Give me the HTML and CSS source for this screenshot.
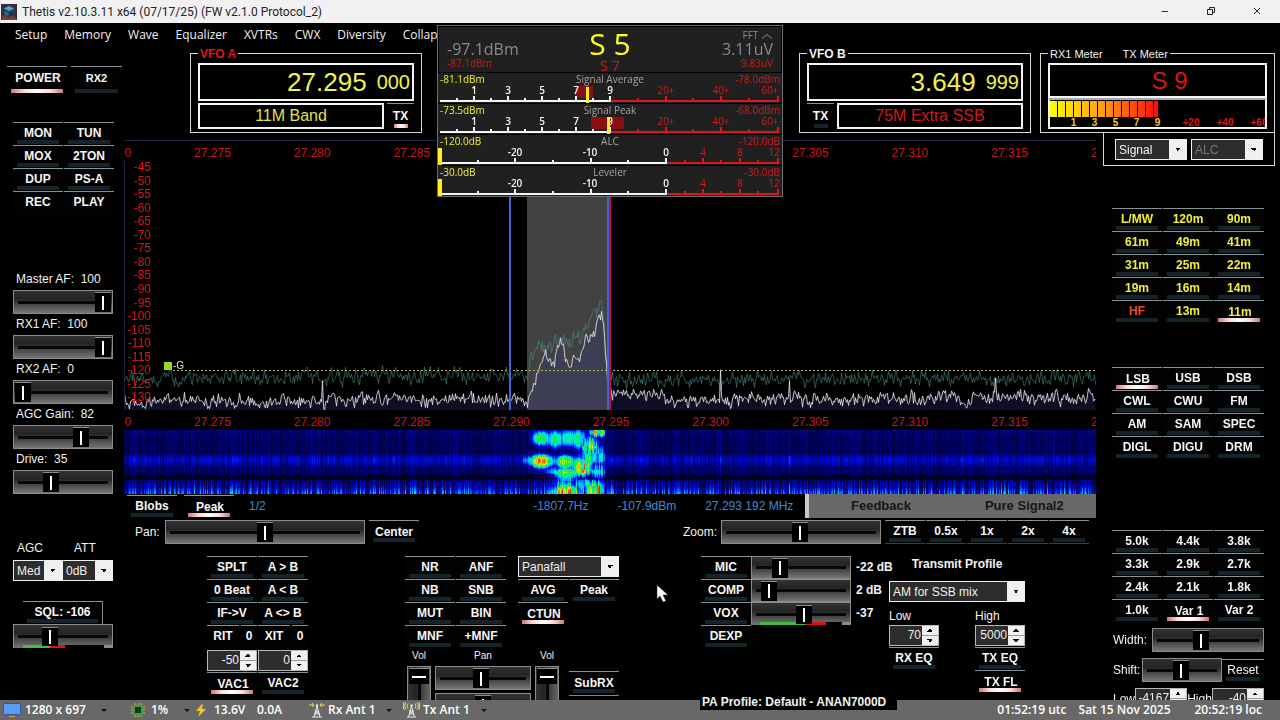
FILE: index.html
```html
<!DOCTYPE html>
<html lang="en">
<head>
<meta charset="utf-8">
<title>Thetis v2.10.3.11 x64</title>
<link rel="stylesheet" href="styles.css">
</head>
<body>
<div class="app">
  <header class="titlebar">
    <svg class="app-icon" width="16" height="16" viewBox="0 0 16 16" aria-hidden="true"><rect width="16" height="16" fill="#3b2a35"/><path d="M1 12l5-2 9 3v3H1z" fill="#7c3a34"/><path d="M8 1l6 3v6l-6 4-6-4V4z" fill="#1d4560"/><path d="M8 2l5 2.500-5 2.500-5-2.500z" fill="#5fa0bd"/><path d="M4 7l3 2v3L4 10z" fill="#2f7090"/><path d="M9 9l3-2v3l-3 2z" fill="#12304a"/></svg>
    <h1>Thetis v2.10.3.11 x64 (07/17/25) (FW v2.1.0 Protocol_2)</h1>
    <div class="win-buttons">
      <button type="button" aria-label="Minimize"><svg width="10" height="10" viewBox="0 0 10 10"><path d="M1.500 5.500h6.500" stroke="#333" fill="none"/></svg></button>
      <button type="button" aria-label="Restore"><svg width="10" height="10" viewBox="0 0 10 10"><path d="M1.500 3.500h5v5h-5zM3.500 3V1.500h5v5H7" stroke="#222" fill="none"/></svg></button>
      <button type="button" aria-label="Close"><svg width="10" height="10" viewBox="0 0 10 10"><path d="M2 2l6 6M8 2l-6 6" stroke="#222" fill="none"/></svg></button>
    </div>
  </header>

  <nav class="menu">
    <a href="#">Setup</a><a href="#">Memory</a><a href="#">Wave</a><a href="#">Equalizer</a><a href="#">XVTRs</a><a href="#">CWX</a><a href="#">Diversity</a><a href="#">Collapse</a>
  </nav>

  <main class="console">
    <aside class="left">
      <div class="power-row">
        <button class="btn wide on" type="button">POWER</button>
        <button class="btn" type="button">RX2</button>
      </div>
      <div class="grid2 tx-keys">
        <button class="btn" type="button">MON</button><button class="btn" type="button">TUN</button>
        <button class="btn" type="button">MOX</button><button class="btn" type="button">2TON</button>
        <button class="btn" type="button">DUP</button><button class="btn" type="button">PS-A</button>
        <button class="btn plain" type="button">REC</button><button class="btn plain" type="button">PLAY</button>
      </div>
      <div class="gains">
        <div><label for="maf">Master AF:  100</label><input id="maf" type="range" value="100"></div>
        <div><label for="r1af">RX1 AF:  100</label><input id="r1af" type="range" value="100"></div>
        <div><label for="r2af">RX2 AF:  0</label><input id="r2af" type="range" value="0"></div>
        <div><label for="agcg">AGC Gain:  82</label><input id="agcg" type="range" value="73"></div>
        <div><label for="drive">Drive:  35</label><input id="drive" type="range" value="35"></div>
      </div>
      <div class="agc">
        <label for="agc">AGC</label><label for="att">ATT</label>
        <select id="agc"><option>Med</option></select>
        <select id="att"><option>0dB</option></select>
      </div>
      <div class="sql">
        <button class="btn boxed" type="button">SQL: -106</button>
        <input class="level-sql" type="range" value="34" aria-label="Squelch">
      </div>
    </aside>

    <section class="top">
      <fieldset class="vfo vfo-a">
        <legend>VFO A</legend>
        <div class="freq"><span>27.295</span><small>000</small></div>
        <div class="band-row"><div class="band">11M Band</div><button class="btn tx on" type="button">TX</button></div>
      </fieldset>
      <fieldset class="vfo vfo-b">
        <legend>VFO B</legend>
        <div class="freq"><span>3.649</span><small>999</small></div>
        <div class="band-row"><button class="btn tx" type="button">TX</button><div class="band off">75M Extra SSB</div></div>
      </fieldset>
      <fieldset class="vfo meter">
        <legend><span>RX1 Meter</span><span>TX Meter</span></legend>
        <div class="readout">S 9</div>
        <div class="bar">
          <div class="bar-fill"></div>
          <div class="bar-scale"><span>1</span><span>3</span><span>5</span><span>7</span><span>9</span><span class="over">+20</span><span class="over">+40</span><span class="over">+60</span></div>
        </div>
      </fieldset>
    </section>

    <section class="center">
      <div class="panadapter">
        <div class="freqs"><span>27.270</span><span>27.275</span><span>27.280</span><span>27.285</span><span>27.290</span><span>27.295</span><span>27.300</span><span>27.305</span><span>27.310</span><span>27.315</span><span>27.320</span></div>
        <div class="spectrum">
          <canvas id="spectrum"></canvas>
          <div class="levels"><span>-45</span><span>-50</span><span>-55</span><span>-60</span><span>-65</span><span>-70</span><span>-75</span><span>-80</span><span>-85</span><span>-90</span><span>-95</span><span>-100</span><span>-105</span><span>-110</span><span>-115</span><span>-120</span><span>-125</span><span>-130</span></div>
          <div class="agc-flag"><i></i>-G</div>
        </div>
        <div class="freqs"><span>27.270</span><span>27.275</span><span>27.280</span><span>27.285</span><span>27.290</span><span>27.295</span><span>27.300</span><span>27.305</span><span>27.310</span><span>27.315</span><span>27.320</span></div>
        <canvas id="waterfall"></canvas>
      </div>

      <div class="info">
        <button class="btn" type="button">Blobs</button>
        <button class="btn on" type="button">Peak</button>
        <span class="blue">1/2</span>
        <div class="cursor-info blue"><span>-1807.7Hz</span><span>-107.9dBm</span><span>27.293 192 MHz</span></div>
        <div class="puresignal"><span>Feedback</span><span>Pure Signal2</span></div>
      </div>

      <div class="panzoom">
        <label for="pan">Pan:</label><input id="pan" class="w200" type="range" value="50">
        <button class="btn" type="button">Center</button>
        <label for="zoom" class="push">Zoom:</label><input id="zoom" class="w160" type="range" value="49">
        <div class="zooms">
          <button class="btn" type="button">ZTB</button><button class="btn" type="button">0.5x</button><button class="btn" type="button">1x</button><button class="btn" type="button">2x</button><button class="btn" type="button">4x</button>
        </div>
      </div>

      <div class="controls">
        <div class="vfo-ctl">
          <div class="grid2">
            <button class="btn" type="button">SPLT</button><button class="btn" type="button">A &gt; B</button>
            <button class="btn" type="button">0 Beat</button><button class="btn" type="button">A &lt; B</button>
            <button class="btn" type="button">IF-&gt;V</button><button class="btn" type="button">A &lt;&gt; B</button>
            <div class="split"><button class="btn plain" type="button">RIT</button><button class="btn plain" type="button">0</button></div>
            <div class="split"><button class="btn plain" type="button">XIT</button><button class="btn plain" type="button">0</button></div>
          </div>
          <div class="grid2 spins">
            <div class="spin"><input value="-50" aria-label="RIT offset"><span><button type="button" aria-label="Up"></button><button class="down" type="button" aria-label="Down"></button></span></div>
            <div class="spin"><input value="0" aria-label="XIT offset"><span><button type="button" aria-label="Up"></button><button class="down" type="button" aria-label="Down"></button></span></div>
          </div>
          <div class="grid2">
            <button class="btn on" type="button">VAC1</button><button class="btn" type="button">VAC2</button>
          </div>
        </div>

        <div class="dsp">
          <div class="dsp-top">
            <div class="grid2">
              <button class="btn" type="button">NR</button><button class="btn" type="button">ANF</button>
              <button class="btn" type="button">NB</button><button class="btn" type="button">SNB</button>
              <button class="btn" type="button">MUT</button><button class="btn" type="button">BIN</button>
              <button class="btn" type="button">MNF</button><button class="btn" type="button">+MNF</button>
            </div>
            <div class="display">
              <select aria-label="Display mode"><option>Panafall</option></select>
              <div class="grid2">
                <button class="btn" type="button">AVG</button><button class="btn" type="button">Peak</button>
                <button class="btn on" type="button">CTUN</button>
              </div>
            </div>
          </div>
          <div class="dsp-bottom">
            <div class="vol"><label for="vol1">Vol</label><input id="vol1" class="vert" type="range" value="0"></div>
            <div class="pans"><label for="pan1">Pan</label><input id="pan1" type="range" value="48"><input type="range" value="50" aria-label="Sub receiver pan"></div>
            <div class="vol"><label for="vol2">Vol</label><input id="vol2" class="vert" type="range" value="0"></div>
            <button class="btn subrx" type="button">SubRX</button>
          </div>
        </div>

        <div class="txctl">
          <div class="mic">
            <button class="btn" type="button">MIC</button><input type="range" value="24" aria-label="Mic gain"><b>-22 dB</b>
            <button class="btn" type="button">COMP</button><input type="range" value="10" aria-label="Compression"><b>2 dB</b>
            <button class="btn" type="button">VOX</button><input class="level-vox" type="range" value="54" aria-label="VOX level"><b>-37</b>
            <button class="btn" type="button">DEXP</button>
          </div>
          <div class="profile">
            <label class="ptitle" for="prof">Transmit Profile</label>
            <select id="prof"><option>AM for SSB mix</option></select>
            <div class="eq">
              <div>
                <label for="txlow">Low</label>
                <div class="spin"><input id="txlow" value="70"><span><button type="button" aria-label="Up"></button><button class="down" type="button" aria-label="Down"></button></span></div>
                <button class="btn" type="button">RX EQ</button>
              </div>
              <div>
                <label for="txhigh">High</label>
                <div class="spin"><input id="txhigh" value="5000"><span><button type="button" aria-label="Up"></button><button class="down" type="button" aria-label="Down"></button></span></div>
                <button class="btn" type="button">TX EQ</button>
                <button class="btn on" type="button">TX FL</button>
              </div>
            </div>
          </div>
        </div>
      </div>
    </section>

    <aside class="right">
      <div class="meter-select">
        <select aria-label="RX meter"><option>Signal</option></select>
        <select aria-label="TX meter" disabled><option>ALC</option></select>
      </div>
      <div class="grid3 bands">
        <button class="btn" type="button">L/MW</button><button class="btn" type="button">120m</button><button class="btn" type="button">90m</button>
        <button class="btn" type="button">61m</button><button class="btn" type="button">49m</button><button class="btn" type="button">41m</button>
        <button class="btn" type="button">31m</button><button class="btn" type="button">25m</button><button class="btn" type="button">22m</button>
        <button class="btn" type="button">19m</button><button class="btn" type="button">16m</button><button class="btn" type="button">14m</button>
        <button class="btn hf" type="button">HF</button><button class="btn" type="button">13m</button><button class="btn on" type="button">11m</button>
      </div>
      <div class="grid3 modes">
        <button class="btn on" type="button">LSB</button><button class="btn" type="button">USB</button><button class="btn" type="button">DSB</button>
        <button class="btn" type="button">CWL</button><button class="btn" type="button">CWU</button><button class="btn" type="button">FM</button>
        <button class="btn" type="button">AM</button><button class="btn" type="button">SAM</button><button class="btn" type="button">SPEC</button>
        <button class="btn" type="button">DIGL</button><button class="btn" type="button">DIGU</button><button class="btn" type="button">DRM</button>
      </div>
      <div class="grid3 filters">
        <button class="btn" type="button">5.0k</button><button class="btn" type="button">4.4k</button><button class="btn" type="button">3.8k</button>
        <button class="btn" type="button">3.3k</button><button class="btn" type="button">2.9k</button><button class="btn" type="button">2.7k</button>
        <button class="btn" type="button">2.4k</button><button class="btn" type="button">2.1k</button><button class="btn" type="button">1.8k</button>
        <button class="btn" type="button">1.0k</button><button class="btn on" type="button">Var 1</button><button class="btn" type="button">Var 2</button>
      </div>
      <div class="fline"><label for="fw">Width:</label><input id="fw" class="w112" type="range" value="42"></div>
      <div class="fline"><label for="fs">Shift:</label><input id="fs" class="w80" type="range" value="49"><button class="btn reset" type="button">Reset</button></div>
      <div class="fline edges">
        <label for="fl">Low</label><div class="spin"><input id="fl" value="-4167"><span><button type="button" aria-label="Up"></button><button class="down" type="button" aria-label="Down"></button></span></div>
        <label for="fh">High</label><div class="spin"><input id="fh" value="-40"><span><button type="button" aria-label="Up"></button><button class="down" type="button" aria-label="Down"></button></span></div>
      </div>
    </aside>
  </main>

  <footer class="status">
    <svg width="18" height="14" viewBox="0 0 18 14" aria-hidden="true"><rect x="0.500" y="0.500" width="17" height="11" rx="1" fill="#5b9cf5" stroke="#2a55a8"/><path d="M6 13.500h6" stroke="#e0a030"/></svg>
    <span class="s-size">1280 x 697</span><i class="caret"></i>
    <svg class="s-cpu" width="14" height="14" viewBox="0 0 14 14" aria-hidden="true"><path d="M4 0v14M7 0v14M10 0v14M0 4h14M0 7h14M0 10h14" stroke="#d9b52c"/><rect x="2" y="2" width="10" height="10" rx="1" fill="#35a04a"/><rect x="4" y="4" width="6" height="6" fill="#1c3324"/></svg>
    <span class="s-load">1%</span><i class="caret"></i>
    <svg class="s-bolt" width="10" height="14" viewBox="0 0 10 14" aria-hidden="true"><path d="M7 0L0 8h4l-2 6 8-8H6z" fill="#f5c52a"/></svg>
    <span class="s-volt">13.6V</span><span class="s-amp">0.0A</span>
    <svg width="16" height="16" viewBox="0 0 16 16" fill="none" aria-hidden="true"><path d="M0 3h5M3 1l2 2-2 2M16 3h-5M13 1l-2 2 2 2" stroke="#f3e02a"/><path d="M8 4L5 15M8 4l3 11M6 9h4M5 12h6M3 15h10M6 9l5 3M10 9l-5 3" stroke="#e8e8e8"/><circle cx="8" cy="3.500" r="1.200" fill="#e8e8e8"/></svg>
    <span class="s-ant">Rx Ant 1</span><i class="caret"></i>
    <svg class="s-tx" width="17" height="16" viewBox="0 0 17 16" fill="none" aria-hidden="true"><path d="M5 1.500q-2 2.500 0 5M3 .5q-3 3.500 0 7M1 0q-1.500 4 0 8M12 1.500q2 2.500 0 5M14 .5q3 3.500 0 7M16 0q1.500 4 0 8" stroke="#f3e02a"/><path d="M8.500 4L5.500 15M8.500 4l3 11M6.500 9h4M6 12h5M4 15h9M6.500 9l4.500 3M10.500 9L6 12" stroke="#e8e8e8"/><circle cx="8.500" cy="3.500" r="1.200" fill="#e8e8e8"/></svg>
    <span class="s-ant">Tx Ant 1</span><i class="caret"></i>
    <time class="s-utc">01:52:19 utc</time><time class="s-date">Sat 15 Nov 2025</time><time>20:52:19 loc</time>
  </footer>

  <div class="pa-profile">PA Profile: Default - ANAN7000D</div>

  <section class="multimeter">
    <div class="mm-head">
      <div class="mm-side"><span class="big">-97.1dBm</span><span class="peak">-87.1dBm</span></div>
      <div class="mm-mid"><span class="s">S 5</span><span class="sp">S 7</span></div>
      <div class="mm-side end"><span class="fft">FFT <svg width="12" height="6" viewBox="0 0 12 6"><path d="M1 5.500l5-4 5 4" fill="none" stroke="#8a8a8a"/></svg></span><span class="big">3.11uV</span><span class="peak">9.83uV</span></div>
    </div>
    <svg class="scale" viewBox="0 0 344 30">
      <rect x="137" y="13" width="18" height="12" fill="#8a0f12"/>
      <g><text x="2" y="10" class="y">-81.1dBm</text><text x="172" y="10" class="g m">Signal Average</text><text x="342" y="10" class="r e">-78.0dBm</text></g>
      <path class="w" d="M2 28h171M36 23v5M70 23v5M104 23v5M138 23v5M172 23v5M19 25v3M53 25v3M87 25v3M121 25v3M155 25v3"/>
      <path class="rd" d="M173 28h168M228 23v5M283 23v5M340 23v5M200 25v3M255 25v3M311 25v3"/>
      <g class="m wt"><text x="36" y="21">1</text><text x="70" y="21">3</text><text x="104" y="21">5</text><text x="138" y="21">7</text><text x="172" y="21">9</text></g>
      <g class="m r num"><text x="228" y="21">20+</text><text x="283" y="21">40+</text><text x="332" y="21">60+</text></g>
      <rect x="148" y="14" width="3" height="16" fill="#ffee20"/>
    </svg>
    <svg class="scale" viewBox="0 0 344 30">
      <rect x="153" y="13" width="33" height="12" fill="#8a0f12"/>
      <g><text x="2" y="10" class="y">-73.5dBm</text><text x="172" y="10" class="g m">Signal Peak</text><text x="342" y="10" class="r e">-68.0dBm</text></g>
      <path class="w" d="M2 28h171M36 23v5M70 23v5M104 23v5M138 23v5M172 23v5M19 25v3M53 25v3M87 25v3M121 25v3M155 25v3"/>
      <path class="rd" d="M173 28h168M228 23v5M283 23v5M340 23v5M200 25v3M255 25v3M311 25v3"/>
      <g class="m wt"><text x="36" y="21">1</text><text x="70" y="21">3</text><text x="104" y="21">5</text><text x="138" y="21">7</text><text x="172" y="21">9</text></g>
      <g class="m r num"><text x="228" y="21">20+</text><text x="283" y="21">40+</text><text x="332" y="21">60+</text></g>
      <rect x="169" y="13" width="3" height="17" fill="#ffee20"/>
    </svg>
    <svg class="scale" viewBox="0 0 344 30">
      <g><text x="2" y="10" class="y">-120.0dB</text><text x="172" y="10" class="g m">ALC</text><text x="342" y="10" class="r e">-120.0dB</text></g>
      <path class="w" d="M2 28h227M77 23v5M153 23v5M228 23v5M40 25v3M115 25v3M190 25v3"/>
      <path class="rd" d="M229 28h112M265 23v5M302 23v5M340 23v5M247 25v3M283 25v3M320 25v3"/>
      <g class="m wt"><text x="77" y="21">-20</text><text x="152" y="21">-10</text><text x="228" y="21">0</text></g>
      <g class="m r num"><text x="265" y="21">4</text><text x="302" y="21">8</text><text x="336" y="21">12</text></g>
      <rect x="0" y="13" width="4" height="17" fill="#ffee20"/>
    </svg>
    <svg class="scale" viewBox="0 0 344 30">
      <g><text x="2" y="10" class="y">-30.0dB</text><text x="172" y="10" class="g m">Leveler</text><text x="342" y="10" class="r e">-30.0dB</text></g>
      <path class="w" d="M2 28h227M77 23v5M153 23v5M228 23v5M40 25v3M115 25v3M190 25v3"/>
      <path class="rd" d="M229 28h112M265 23v5M302 23v5M340 23v5M247 25v3M283 25v3M320 25v3"/>
      <g class="m wt"><text x="77" y="21">-20</text><text x="152" y="21">-10</text><text x="228" y="21">0</text></g>
      <g class="m r num"><text x="265" y="21">4</text><text x="302" y="21">8</text><text x="336" y="21">12</text></g>
      <rect x="0" y="13" width="4" height="17" fill="#ffee20"/>
    </svg>
  </section>

  <svg class="pointer" width="14" height="20" viewBox="0 0 14 20" aria-hidden="true"><path d="M1 1v14l3-3 3 6 3-1-3-6h5z" fill="#fff" stroke="#222" stroke-width=".5"/></svg>
</div>
<script src="app.js"></script>
</body>
</html>
```

FILE: styles.css
```css
* { box-sizing: border-box; }

body {
  margin: 0;
  background: #000;
  color: #f2f2f2;
  font: 12px/16px "Liberation Sans", Arial, sans-serif;
}

.app {
  position: relative;
  display: flex;
  flex-direction: column;
  height: 100vh;
  overflow: hidden;
}

label { white-space: pre; }

/* Title bar and menu */
.titlebar {
  display: flex;
  align-items: center;
  flex: none;
  height: 23px;
  background: #f2f1f1;
  color: #222;
}
.titlebar h1 {
  margin: 0 auto 0 5px;
  font: 400 12px/16px Roboto, "Noto Sans", sans-serif;
}
.app-icon { margin-left: 1px; }
.win-buttons { display: flex; }
.win-buttons button {
  width: 46px;
  height: 23px;
  padding: 0;
  border: 0;
  background: none;
}

.menu {
  display: flex;
  flex: none;
  gap: 17px;
  height: 22px;
  padding: 4px 15px;
  font-family: "Open Sans", "Noto Sans", sans-serif;
}
.menu a {
  color: #f0f0f0;
  text-decoration: none;
}

/* Main grid */
.console {
  display: grid;
  flex: 1;
  grid-template-columns: 124px 1fr 184px;
  grid-template-rows: 88px 1fr;
  min-height: 0;
  overflow: hidden;
}
.left { grid-row: 1 / 3; padding: 21px 2px 0 7px; }
.top { grid-column: 2 / 4; }
.center { padding-top: 7px; min-width: 0; }
.right { padding: 0 5px 0 7px; }

/* Buttons */
.btn {
  width: 50px;
  height: 23px;
  padding: 0 0 2px;
  border: 0;
  border-top: 1px solid #8a9495;
  background: linear-gradient(#15242a, #15242a) center 17px / calc(100% - 8px) 4px no-repeat #020202;
  color: #f6f6f6;
  font: bold 12px/16px "Liberation Sans", Arial, sans-serif;
  white-space: nowrap;
}
.btn.on {
  padding: 0 0 0 2px;
  background: linear-gradient(90deg, #c97a78, #ffd9d6 25%, #fff 50%, #ffd9d6 75%, #c97a78) center 17px / calc(100% - 8px) 4px no-repeat #020202;
}
.btn.plain { background: #020202; }

.grid2, .grid3 {
  display: grid;
  grid-template-columns: 50px 50px;
  column-gap: 1px;
}
.grid3 { grid-template-columns: 50px 50px 50px; }

/* Sliders */
input[type="range"] {
  -webkit-appearance: none;
  appearance: none;
  display: block;
  width: 100px;
  height: 24px;
  margin: 0;
  padding: 0 1px;
  border: 1px solid #8b8b8b;
  background:
    linear-gradient(#070707, #070707) center / calc(100% - 8px) 3px no-repeat,
    linear-gradient(#333, #242424 35%, #767676);
}
input[type="range"]::-webkit-slider-thumb {
  -webkit-appearance: none;
  width: 16px;
  height: 20px;
  border-top: 1px solid #8b8b8b;
  border-radius: 0;
  background: linear-gradient(#fff, #fff) center / 2px 14px no-repeat #000;
}
input.w200 { width: 200px; }
input.w160 { width: 160px; }
input.w112 { width: 112px; }
input.w80 { width: 80px; }
input.level-sql, input.level-vox {
  border-bottom: 0;
  background:
    linear-gradient(90deg, transparent 9%, #3cbf3c 9% 37%, #d81414 37% 52%, #000 52% 92%, #8b8b8b 92%) bottom / 100% 3px no-repeat,
    linear-gradient(#070707, #070707) center / calc(100% - 8px) 3px no-repeat,
    linear-gradient(#333, #242424 35%, #767676);
}
input.level-vox {
  background:
    linear-gradient(90deg, transparent 8%, #3cbf3c 8% 55%, #d81414 55% 76%, #000 76% 92%, #8b8b8b 92%) bottom / 100% 3px no-repeat,
    linear-gradient(#070707, #070707) center / calc(100% - 8px) 3px no-repeat,
    linear-gradient(#333, #242424 35%, #767676);
}
input.level-sql::-webkit-slider-thumb, input.level-vox::-webkit-slider-thumb { height: 19px; }
input.vert {
  writing-mode: vertical-lr;
  width: 24px;
  height: 80px;
  padding: 1px 0;
  background:
    linear-gradient(#070707, #070707) center / 3px calc(100% - 8px) no-repeat,
    linear-gradient(90deg, #333, #242424 35%, #666);
}
input.vert::-webkit-slider-thumb {
  width: 20px;
  height: 16px;
  background: linear-gradient(#fff, #fff) center / 14px 2px no-repeat #000;
}

/* Drop-downs */
select {
  -webkit-appearance: none;
  appearance: none;
  display: block;
  height: 21px;
  margin: 0;
  padding: 0 18px 0 3px;
  border: 1px solid #f0f0f0;
  border-radius: 0;
  background:
    linear-gradient(45deg, transparent 50%, #000 50%) right 8px center / 3px 3px no-repeat,
    linear-gradient(135deg, #000 50%, transparent 50%) right 5px center / 3px 3px no-repeat,
    linear-gradient(#f0f0f0, #f0f0f0) right / 17px 100% no-repeat #2d2d2d;
  color: #f0f0f0;
  font: 12px/16px "Liberation Sans", Arial, sans-serif;
}
select:disabled { color: #777; opacity: 1; }

/* Spin boxes */
.spin {
  display: flex;
  height: 21px;
  border: 1px solid #b8b8b8;
  background: #2d2d2d;
}
.spin input {
  flex: 1;
  width: 0;
  min-width: 0;
  padding: 0 1px 2px 0;
  border: 0;
  background: none;
  color: #eee;
  font: 12px/16px "Liberation Sans", Arial, sans-serif;
  text-align: right;
}
.spin span {
  display: grid;
  width: 16px;
  gap: 1px;
  background: #999;
}
.spin button {
  min-height: 0;
  padding: 0;
  border: 0;
  background:
    linear-gradient(135deg, transparent 50%, #000 50%) 5px center / 3px 3px no-repeat,
    linear-gradient(45deg, #000 50%, transparent 50%) 8px center / 3px 3px no-repeat #f0f0f0;
}
.spin .down {
  background:
    linear-gradient(45deg, transparent 50%, #000 50%) 5px center / 3px 3px no-repeat,
    linear-gradient(135deg, #000 50%, transparent 50%) 8px center / 3px 3px no-repeat #f0f0f0;
}

/* Left column */
.power-row { display: flex; gap: 4px; }
.power-row .btn {
  height: 29px;
  padding-bottom: 6px;
  background-position: center 22px;
}
.power-row .btn:last-child { width: 51px; font-size: 11px; }
.power-row .wide { width: 60px; }
.tx-keys { margin: 27px 0 0 6px; }
.gains {
  display: grid;
  gap: 2px;
  margin: 57px 0 0 6px;
}
.gains label {
  display: block;
  height: 19px;
  padding-left: 3px;
}
.agc {
  display: grid;
  grid-template-columns: 49px 51px;
  row-gap: 4px;
  margin: 46px 0 0 6px;
}
.agc label:first-child { padding-left: 4px; }
.agc label + label { padding-left: 12px; }
.agc select { width: 100%; }
.sql { margin: 20px 0 0 6px; }
.boxed {
  display: block;
  width: 80px;
  margin-left: 10px;
  border-right: 1px solid #7e8889;
}

/* VFO displays and meter */
.top {
  display: flex;
  padding: 1px 5px 0 66px;
}
.vfo {
  display: block;
  width: 232px;
  height: 87px;
  min-width: 0;
  margin: 0;
  padding: 2px 7px 5px;
  border: 1px solid #d8d8d8;
}
.vfo legend {
  height: 15px;
  padding: 0 2px;
  font-weight: bold;
}
.vfo-a legend { color: #e81212; }
.vfo-b { margin-left: auto; }
.meter { width: 235px; margin-left: 9px; }
.vfo.meter legend {
  display: flex;
  gap: 20px;
  font-size: 11px;
  font-weight: 400;
}
.freq {
  display: flex;
  align-items: center;
  justify-content: flex-end;
  gap: 10px;
  height: 38px;
  padding-right: 2px;
  border: 2px solid #f4f4f4;
  color: #f2f24a;
  font-size: 26px;
  line-height: 30px;
}
.freq small { font-size: 20px; }
.band-row {
  display: flex;
  gap: 3px;
  margin-top: 2px;
}
.band {
  flex: 1;
  height: 26px;
  border: 2px solid #f4f4f4;
  color: #e2e24a;
  font-size: 16px;
  line-height: 22px;
  text-align: center;
}
.band.off { color: #d4181c; }
.btn.tx {
  width: 27px;
  height: 26px;
  padding: 0 0 2px;
  background-position: center 20px;
  background-size: 14px 4px;
}
.readout {
  height: 35px;
  padding-left: 24px;
  border: 2px solid #f4f4f4;
  color: #dc1418;
  font-size: 24px;
  line-height: 31px;
  text-align: center;
}
.bar {
  height: 31px;
  overflow: hidden;
  border: 2px solid #f4f4f4;
  border-top-color: #aaa;
}
.bar-fill {
  width: 50%;
  height: 16px;
  margin-top: 1px;
  background:
    repeating-linear-gradient(90deg, transparent 0 7px, #000 7px 8px),
    linear-gradient(90deg, #ffff00, #ff9a18 50%, #ff0a0a);
}
.bar-scale {
  display: grid;
  grid-template-columns: 13px repeat(5, 21px) 6px repeat(3, 34px);
  color: #e8c838;
  font: bold 10px/12px "Liberation Sans", Arial, sans-serif;
  text-align: center;
}
.bar-scale span:first-child { grid-column: 2; }
.bar-scale .over { color: #e01414; }
.bar-scale span:nth-child(6) { grid-column: 8; }

/* Panadapter */
.panadapter {
  overflow: hidden;
  border-top: 1px solid #1c2440;
}
.freqs {
  display: flex;
  height: 20px;
  margin: 0 -63px 0 -61px;
  color: #c8181e;
  line-height: 24px;
}
.freqs span { flex: 1; text-align: center; }
.spectrum {
  position: relative;
  height: 249px;
}
.spectrum canvas { display: block; width: 100%; height: 100%; }
.levels {
  position: absolute;
  top: 0;
  left: 0;
  display: grid;
  width: 27px;
  height: 244px;
  color: #dc161c;
  line-height: 12px;
  text-align: right;
}
.agc-flag {
  position: absolute;
  top: 200px;
  left: 40px;
  display: flex;
  align-items: center;
  gap: 1px;
  color: #e6e6a8;
  font-size: 10px;
  line-height: 10px;
}
.agc-flag i { width: 8px; height: 8px; background: #96d82c; }
#waterfall { display: block; width: 100%; height: 64px; }

/* Readouts below the waterfall */
.blue { color: #3f8ad8; }
.info {
  display: flex;
  height: 24px;
  padding-left: 3px;
  line-height: 24px;
}
.info .btn { margin: 1px 7px 0 0; }
.info > .blue { margin-left: 8px; }
.info .cursor-info {
  display: flex;
  gap: 29px;
  margin: 0 12px 0 auto;
}
.puresignal {
  display: flex;
  width: 30%;
  border-left: 4px solid #c8c8c8;
  background: #686868;
  color: #161616;
  font-size: 13px;
  font-weight: bold;
}
.puresignal span { flex: 1; text-align: center; }

.panzoom {
  display: flex;
  align-items: center;
  height: 24px;
  margin-top: 2px;
  padding: 0 7px 0 11px;
}
.panzoom label { width: 30px; }
.panzoom .push { width: 38px; margin-left: auto; }
.panzoom .btn { height: 24px; }
.panzoom > .btn { margin-left: 4px; }
.zooms { display: flex; gap: 1px; margin-left: 4px; }
.zooms .btn { width: 40px; border-bottom: 1px solid #3a4242; }

/* Bottom controls */
.controls {
  display: grid;
  grid-template-columns: 83fr 101px 97fr 214px 82fr 324px 71fr;
  margin-top: 12px;
}
.vfo-ctl { grid-column: 2; }
.dsp { grid-column: 4; }
.txctl { grid-column: 6; }

.split { display: flex; gap: 2px; }
.split .btn { width: 32px; }
.split .btn + .btn { width: 16px; padding: 0 0 2px; }
.spins { margin: 2px 0 1px; }

.dsp-top { display: flex; gap: 12px; }
.display select { width: 101px; margin-bottom: 2px; }
.dsp-bottom {
  display: flex;
  gap: 4px;
  padding-left: 2px;
}
.dsp-bottom label {
  display: block;
  height: 18px;
  font-size: 10px;
  text-align: center;
}
.pans input { width: 96px; margin-bottom: 3px; }
.subrx {
  height: 25px;
  margin: 23px 0 0 6px;
  border-bottom: 1px solid #7e8889;
}

.txctl { display: flex; justify-content: space-between; }
.mic {
  display: grid;
  grid-template-columns: 50px 100px 38px;
  grid-auto-rows: 23px;
  align-items: start;
}
.mic input { height: 23px; }
.mic b { padding: 3px 0 0 5px; white-space: nowrap; }
.profile { width: 136px; }
.profile .ptitle {
  display: block;
  height: 25px;
  font-weight: bold;
  text-align: center;
}
.profile select { width: 100%; }
.eq {
  display: flex;
  justify-content: space-between;
  margin-top: 6px;
}
.eq > div { width: 50px; }
.eq label { display: block; height: 17px; }
.eq .spin { margin-bottom: 1px; }
.eq .btn { display: block; }

/* Right column */
.meter-select {
  display: flex;
  gap: 4px;
  height: 33px;
  padding: 6px 11px;
  border: 1px solid #d8d8d8;
  border-top: 0;
}
.meter-select select { width: 72px; }
.grid3 { margin-left: 9px; }
.bands { margin-top: 42px; }
.bands .btn { color: #f0f03c; }
.bands .hf { color: #f04a28; }
.modes { margin-top: 44px; }
.filters { margin-top: 71px; margin-bottom: 6px; }
.fline {
  display: flex;
  align-items: center;
  justify-content: space-between;
  height: 24px;
  margin: 0 11px 6px 10px;
}
.fline label { margin-right: auto; }
.reset { width: 42px; font-weight: 400; }
.fline.edges { height: 21px; }
.edges .spin { width: 52px; }

/* Status bar */
.status {
  display: flex;
  align-items: center;
  flex: none;
  height: 20px;
  padding: 0 18px 0 3px;
  background: #686868;
  color: #fff;
  font: 600 12px/20px "Open Sans", "Noto Sans", sans-serif;
  white-space: nowrap;
}
.caret {
  flex: none;
  border: 3px solid transparent;
  border-top-color: #111;
  border-bottom: 0;
}
.status svg { flex: none; }
.s-size { width: 76px; margin-left: 4px; }
.s-cpu { margin-left: 24px; }
.s-load { width: 33px; margin-left: 6px; }
.s-bolt { margin-left: 6px; }
.s-volt { width: 43px; margin-left: 8px; }
.s-amp { width: 52px; }
.s-ant { width: 58px; margin-left: 3px; }
.s-tx { margin-left: 11px; }
.s-utc { margin-left: auto; }
.s-date { margin: 0 24px 0 12px; }

.pa-profile {
  position: absolute;
  bottom: 10px;
  left: 700px;
  width: 197px;
  padding: 0 2px;
  background: #000;
  font-weight: bold;
  white-space: nowrap;
}

/* Floating multimeter */
.multimeter {
  position: absolute;
  top: 25px;
  left: 437px;
  width: 346px;
  border: 1px solid #6c6c6c;
  background: #000;
  font-family: "Open Sans", "Noto Sans", sans-serif;
}
.mm-head {
  display: grid;
  grid-template-columns: 1fr 1fr 1fr;
  height: 45px;
  margin: 1px 1px 0;
  padding: 0 8px;
  background: #202020;
  color: #8a8a8a;
}
.mm-side {
  display: flex;
  flex-direction: column;
  justify-content: flex-end;
  padding-bottom: 3px;
}
.mm-side.end { text-align: right; }
.mm-head .big { font-size: 16px; font-weight: 500; line-height: 17px; }
.mm-head .peak { color: #d8181c; font-size: 10px; line-height: 11px; }
.mm-head .fft { font-size: 10px; line-height: 11px; }
.mm-mid {
  display: flex;
  flex-direction: column;
  text-align: center;
}
.mm-mid .s { color: #ffff1e; font-size: 30px; font-weight: 500; line-height: 34px; }
.mm-mid .sp { color: #d8181c; font-size: 14px; line-height: 10px; }

.scale {
  display: block;
  width: 100%;
  margin-top: 1px;
  background: #202020;
  font-size: 10px;
}
.scale .y { fill: #f0f02c; }
.scale .g { fill: #a2a2a2; }
.scale .r { fill: #d8181c; }
.scale .wt { fill: #f4f4f4; font-weight: 600; }
.scale .num { font-weight: 500; }
.scale .m { text-anchor: middle; }
.scale .e { text-anchor: end; }
.scale path { fill: none; stroke-width: 2; }
.scale .w { stroke: #f4f4f4; }
.scale .rd { stroke: #d8181c; }

.pointer {
  position: absolute;
  top: 584px;
  left: 656px;
}
```

FILE: app.js
```js
let seed = 12345;
function rnd() {
  seed = (seed * 1664525 + 1013904223) % 4294967296;
  return seed / 4294967296;
}

function prepare(id) {
  const c = document.getElementById(id);
  c.width = c.clientWidth;
  c.height = c.clientHeight;
  return c;
}

// Linear interpolation through [x, y] pairs; x is in units of a 972-wide plot.
function curve(points, x) {
  if (x <= points[0][0]) return points[0][1];
  for (let i = 1; i < points.length; i++) {
    const a = points[i - 1], b = points[i];
    if (x <= b[0]) return a[1] + (b[1] - a[1]) * (x - a[0]) / (b[0] - a[0]);
  }
  return points[points.length - 1][1];
}

function drawSpectrum() {
  const c = prepare('spectrum'), g = c.getContext('2d');
  const w = c.width, h = c.height, k = w / 972;
  const live = [[0, 241], [402, 239], [409, 226], [416, 201], [421, 195], [428, 206], [433, 186], [436, 180],
    [441, 195], [446, 206], [450, 196], [453, 203], [456, 201], [462, 170], [464, 180], [469, 176],
    [473, 155], [475, 146], [479, 162], [481, 195], [483, 224], [488, 231], [533, 235], [550, 240], [972, 236]];
  const peak = [[0, 217], [402, 213], [409, 192], [416, 180], [422, 190], [436, 183], [443, 192], [449, 178],
    [456, 182], [462, 166], [469, 152], [474, 142], [476, 128], [479, 144], [481, 180], [483, 213], [490, 219], [972, 217]];
  const spikes = { 198: 20, 596: 32, 665: 26, 871: 16, 60: 10 };

  g.fillStyle = '#424242';
  g.fillRect(403 * k, 0, 80 * k, h);

  const line = [], hold = [];
  let n1 = 0, n2 = 0;
  for (let x = 0; x < w; x++) {
    const u = x / k;
    n1 = n1 * .3 + (rnd() + rnd() - 1) * 9;
    n2 = n2 * .4 + (rnd() + rnd() - 1) * (u > 403 && u < 481 ? 13 : 10);
    let y = curve(live, u) + n1;
    const s = spikes[Math.round(u)];
    if (s) y -= s;
    line.push(y);
    hold.push(curve(peak, u) + n2);
  }

  g.beginPath();
  g.moveTo(0, h);
  line.forEach((y, x) => g.lineTo(x, y));
  g.lineTo(w, h);
  g.fillStyle = 'rgba(52, 52, 130, .28)';
  g.fill();

  function trace(data, color) {
    g.beginPath();
    data.forEach((y, x) => g.lineTo(x + .5, y));
    g.strokeStyle = color;
    g.lineWidth = 1;
    g.stroke();
  }
  trace(hold, 'rgba(72, 140, 128, .6)');
  trace(line, 'rgba(228, 228, 238, .85)');

  g.setLineDash([2, 2]);
  g.strokeStyle = '#b4b454';
  g.beginPath();
  g.moveTo(49, 209.5);
  g.lineTo(w, 209.5);
  g.stroke();
  g.setLineDash([]);

  g.fillStyle = '#4463d8';
  g.fillRect(385 * k, 0, 2, h);
  g.fillRect(483 * k, 0, 2, h);
  g.fillStyle = '#b8143c';
  g.fillRect(485 * k, 0, 2, h);
  g.fillStyle = '#1c2440';
  g.fillRect(0, 0, 1, h);
}

const ramp = [[0, 0, 0, 12], [.2, 0, 0, 90], [.4, 0, 10, 225], [.52, 0, 120, 255], [.64, 0, 235, 235],
  [.78, 20, 235, 60], [.92, 215, 245, 20], [1.04, 250, 90, 10], [1.15, 190, 20, 110]];
function heat(v) {
  if (v <= 0) return [0, 0, 12];
  for (let i = 1; i < ramp.length; i++) {
    const a = ramp[i - 1], b = ramp[i];
    if (v <= b[0]) {
      const t = (v - a[0]) / (b[0] - a[0]);
      return [1, 2, 3].map(n => a[n] + (b[n] - a[n]) * t);
    }
  }
  return [190, 20, 110];
}

function drawWaterfall() {
  const c = prepare('waterfall'), g = c.getContext('2d');
  const w = c.width, h = c.height, k = w / 972;
  const img = g.createImageData(w, h);
  const rows = [[0, .24], [8, .2], [22, .19], [26, .3], [30, .35], [34, .29], [38, .2], [42, .24], [45, .06],
    [48, .07], [50, .22], [56, .3], [63, .44]];
  // Signal blobs: x, y, x radius, y radius, strength
  const blobs = [[417, 8, 8, 6, .55], [430, 9, 9, 7, .5], [445, 8, 8, 7, .5], [454, 9, 7, 8, .48], [465, 15, 8, 7, .5],
    [474, 2, 7, 4, .6], [417, 31, 10, 6, .62], [406, 30, 6, 4, .3], [441, 32, 7, 6, .55], [457, 38, 8, 8, .66],
    [442, 44, 11, 6, .62], [428, 41, 6, 4, .35], [466, 25, 9, 7, .38], [475, 24, 5, 9, .35], [474, 42, 6, 7, .45],
    [442, 61, 10, 7, .6], [440, 53, 9, 4, .3], [471, 58, 8, 8, .5], [458, 53, 8, 6, .35]];
  const col = [], low = [];
  for (let x = 0; x < w; x++) { col.push(rnd()); low.push(rnd()); }
  for (let y = 0; y < h; y++) {
    for (let x = 0; x < w; x++) {
      const u = x / k;
      let v = curve(rows, y) + (col[x] - .5) * .1 + (rnd() - .5) * .05;
      if (y > 47) v += (low[x] - .55) * .45 * (y - 42) / 22;
      if (y > 25 && y < 36) v += (low[(x >> 2) + 3] - .5) * .1;
      if (Math.abs(u - 596) < 1 || Math.abs(u - 665) < 1) v += .08;
      if (u > 396 && u < 481) {
        let s = 0;
        for (const b of blobs) {
          const dx = (u - b[0]) / b[2], dy = (y - b[1]) / b[3];
          s = Math.max(s, b[4] * Math.exp(-Math.pow(dx * dx + dy * dy, 1.5) * .5));
        }
        s *= u > 457 ? .65 + .8 * low[(x * 3 + (y >> 3)) % w] : .94 + .14 * col[x];
        v += s;
      }
      const p = (y * w + x) * 4, rgb = heat(v);
      img.data[p] = rgb[0];
      img.data[p + 1] = rgb[1];
      img.data[p + 2] = rgb[2];
      img.data[p + 3] = 255;
    }
  }
  g.putImageData(img, 0, 0);
}

function draw() {
  seed = 12345;
  drawSpectrum();
  drawWaterfall();
}
draw();
window.addEventListener('resize', draw);
```
